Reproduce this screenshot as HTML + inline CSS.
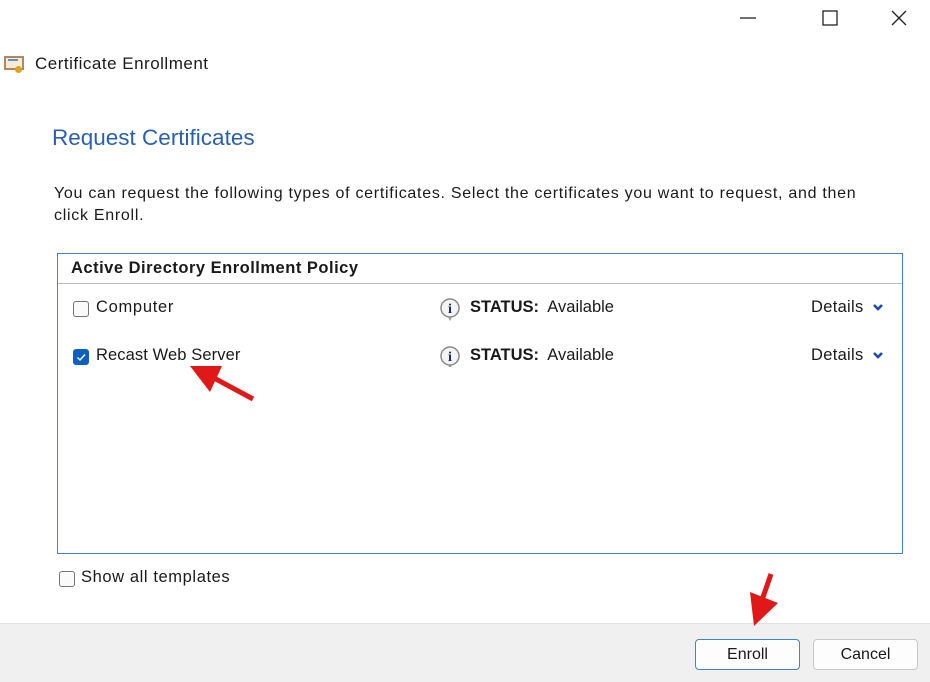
<!DOCTYPE html>
<html><head><meta charset="utf-8"><style>
body{margin:0;width:930px;height:681px;background:#fff;font-family:"Liberation Sans",sans-serif;color:#1a1a1a;position:relative;overflow:hidden;font-size:15px}
.a{position:absolute}
.cb{position:absolute;width:16px;height:16px;border:1px solid #767676;border-radius:3px;background:#fafafa;box-sizing:border-box}
.btn{position:absolute;top:639px;height:31px;border:1px solid #c8c8c8;border-radius:4px;background:#fdfdfd;box-sizing:border-box;text-align:center;line-height:29px;font-size:16px}
.t{font-size:16.5px;letter-spacing:0.3px}
</style></head><body>
<svg class="a" style="left:0;top:0" width="930" height="40">
<line x1="740" y1="18" x2="756" y2="18" stroke="#222" stroke-width="1.3"/>
<rect x="823" y="11" width="14" height="14" fill="none" stroke="#222" stroke-width="1.3"/>
<path d="M892 11 L906 25 M906 11 L892 25" stroke="#222" stroke-width="1.3"/>
</svg>
<div class="a" style="left:4px;top:56px;width:20px;height:14px;background:#f5ecd8;border:2px solid #b08860;box-sizing:border-box"></div>
<div class="a" style="left:8px;top:59px;width:10px;height:2px;background:#6a8ac0"></div>
<div class="a" style="left:15px;top:66px;width:7px;height:7px;border-radius:50%;background:#e0a020"></div>
<div class="a" style="left:35px;top:54px;font-size:17px;letter-spacing:0.5px">Certificate Enrollment</div>
<div class="a" style="left:52px;top:125px;font-size:22.5px;color:#2a5fb0">Request Certificates</div>
<div class="a" style="left:54px;top:183px;font-size:16px;letter-spacing:0.72px;line-height:22px;width:825px">You can request the following types of certificates. Select the certificates you want to request, and then click Enroll.</div>
<div class="a" style="left:57px;top:253px;width:846px;height:301px;border:1px solid #3a86d4;box-sizing:border-box"></div>
<div class="a" style="left:71px;top:259px;font-weight:bold;font-size:16.5px;letter-spacing:0.5px">Active Directory Enrollment Policy</div>
<div class="a" style="left:58px;top:283px;width:844px;height:1px;background:#bcbcbc"></div>
<div class="cb" style="left:73px;top:301px"></div>
<div class="a t" style="left:96px;top:298px;letter-spacing:0.7px">Computer</div>
<div class="cb" style="left:73px;top:349px;background:#0f5fbe;border-color:#0f5fbe"><svg width="14" height="14"><path d="M3.5 7.5 L6 10 L11 4.5" stroke="#fff" stroke-width="1.4" fill="none"/></svg></div>
<div class="a t" style="left:96px;top:346px;letter-spacing:0.1px">Recast Web Server</div>
<svg class="a" style="left:439px;top:297px" width="24" height="70">
<g id="ic"><circle cx="11" cy="11" r="9" fill="#f4f4f4" stroke="#8a8a8a" stroke-width="1.5"/><path d="M9 20 L11 24 L13 20" fill="#999"/><text x="11" y="16" text-anchor="middle" font-family="Liberation Serif" font-weight="bold" font-size="14" fill="#1a2a5a">i</text></g>
<use href="#ic" y="48"/>
</svg>
<div class="a" style="left:470px;top:298px;font-size:16.5px"><b>STATUS:</b>&nbsp; Available</div>
<div class="a" style="left:470px;top:346px;font-size:16.5px"><b>STATUS:</b>&nbsp; Available</div>
<div class="a t" style="left:811px;top:298px">Details</div>
<div class="a t" style="left:811px;top:346px">Details</div>
<svg class="a" style="left:872px;top:303px" width="12" height="60"><path d="M2 2 L6 6 L10 2" stroke="#1a4fa8" stroke-width="2.6" fill="none"/><path d="M2 50 L6 54 L10 50" stroke="#1a4fa8" stroke-width="2.6" fill="none"/></svg>
<div class="cb" style="left:59px;top:571px"></div>
<div class="a t" style="left:81px;top:568px;letter-spacing:0.6px">Show all templates</div>
<div class="a" style="left:0;top:623px;width:930px;height:58px;background:#f0f0f0;border-top:1px solid #e2e2e2"></div>
<div class="btn" style="left:695px;width:105px;border:1.5px solid #3a86d4">Enroll</div>
<div class="btn" style="left:813px;width:105px">Cancel</div>
<svg class="a" style="left:0;top:0" width="930" height="681">
<path d="M253 399 L214 378" stroke="#e01818" stroke-width="5"/>
<polygon points="190,366 222,366 210,392" fill="#e01818"/>
<path d="M771 574 L762 600" stroke="#e01818" stroke-width="5"/>
<polygon points="750,592 778,603 754,626" fill="#e01818"/>
</svg>
</body></html>
